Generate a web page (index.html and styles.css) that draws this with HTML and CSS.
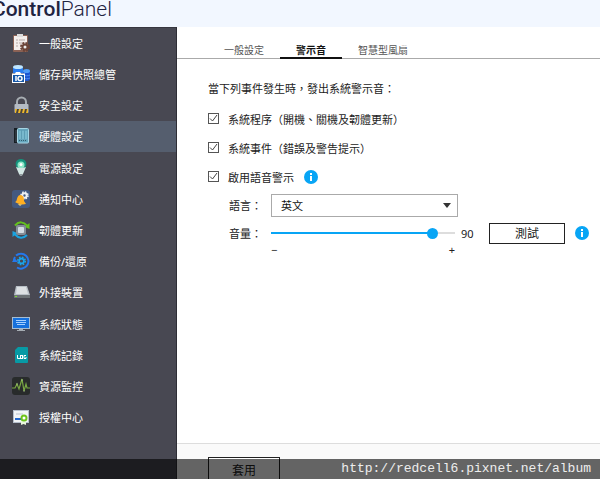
FILE: index.html
```
<!DOCTYPE html>
<html lang="zh-Hant">
  <head>
    <meta charset="UTF-8" />
    <meta name="viewport" content="width=device-width, initial-scale=1.0" />
    <title>ControlPanel</title>
    <link rel="stylesheet" href="styles.css">
  </head>
  <body>
    <div class="window">
      <header class="topbar">
        <h1 class="title"><b>Control</b>Panel</h1>
      </header>

      <div class="main">
        <nav class="sidebar">
          <ul class="menu">
            <li><a href="#">
              <svg class="icon" viewBox="0 0 18 18"><rect x="1" y="1" width="15" height="17" rx="1" fill="#8b6255"/><path d="M2 2h13v14H2z" fill="#f4eeec"/><path d="M5 0h6v3H5z" fill="#ddd"/><path d="M4 6h2M4 9h2M4 12h2M7 6h6M7 9h3" stroke="#b5a9a6"/><circle cx="13" cy="13" r="4" fill="none" stroke="#6b4438" stroke-width="2" stroke-dasharray="2 1.140"/><circle cx="13" cy="13" r="2.500" fill="#eee" stroke="#6b4438" stroke-width="2"/></svg>
              一般設定</a></li>
            <li><a href="#">
              <svg class="icon" viewBox="0 0 18 18"><path d="M1 2v6h10V2z" fill="#2a7df0"/><ellipse cx="6" cy="2" rx="5" ry="2" fill="#bfe6ff"/><path d="M11 6v9c2 2 7 1 7-1V6z" fill="#1d55d0"/><ellipse cx="14.500" cy="6" rx="3.500" ry="2" fill="#4f9cf6"/><path d="M11 10c2 1 5 1 7 0M11 13c2 1 5 1 7 0" fill="none" stroke="#4f8bf0"/><path d="M0 8.500h3l1-1.500h4l1 1.500h4V18H0z" fill="#fff"/><path d="M1 10h11v7H1z" fill="#1557a8"/><path d="M4 11v5" stroke="#fff" stroke-width="1.500"/><circle cx="8" cy="13.500" r="2" fill="none" stroke="#fff" stroke-width="1.500"/></svg>
              儲存與快照總管</a></li>
            <li><a href="#">
              <svg class="icon" viewBox="0 0 18 18"><path d="M5 10V6a4 4 0 0 1 9 0v4" fill="none" stroke="#a7adb2" stroke-width="2"/><rect x="2.500" y="8" width="14" height="9" rx="1" fill="#b4bbc4"/><path d="M3 13h13v4H3z" fill="#efb82c"/><path d="M5 13h2l-1 4H4zM9 13h2l-1 4H8zM13 13h2l-1 4h-2z" fill="#4b4438"/></svg>
              安全設定</a></li>
            <li class="active"><a href="#">
              <svg class="icon" viewBox="0 0 18 18"><path d="M2 1h5v15H2z" fill="#171e24"/><path d="M4 3v12" stroke="#46505a"/><rect x="5.500" y="1.500" width="11" height="14.500" rx="1" fill="#65a6bd" stroke="#a6d5e4"/><path d="M7 4h8v8H7z" fill="#78b9cd"/><path d="M9.500 3v9M12.500 3v9" stroke="#5d9eb5"/><path d="M7 13.500h8" stroke="#335d6c" stroke-dasharray="1 1"/></svg>
              硬體設定</a></li>
            <li><a href="#">
              <svg class="icon" viewBox="0 0 18 18"><path d="M9 0C4 0 3 4 4 7l3 6h4l3-6c1-3 0-7-5-7z" fill="#15937d"/><circle cx="9" cy="6" r="3.500" fill="#8ee8c8"/><path d="M4 8l3 7q2 4 4 0l3-7q-5 2-10 0z" fill="#d3e6e4"/><path d="M7 15q2 4 4 0z" fill="#8e979b"/><circle cx="9" cy="5.500" r="1.500" fill="#fff"/></svg>
              電源設定</a></li>
            <li><a href="#">
              <svg class="icon" viewBox="0 0 18 18"><rect width="18" height="18" rx="3" fill="#435980"/><circle cx="12.500" cy="5.500" r="3.500" fill="none" stroke="#eef1f6" stroke-width="1.500" stroke-dasharray="1.500 1.250"/><circle cx="12.500" cy="5.500" r="2.200" fill="none" stroke="#eef1f6" stroke-width="2"/><path d="M3 12c3-1 1-6 5-7 4 0 4 4 4 6l2 3c-4 1-8 0-11-2z" fill="#ffaf22"/><path d="M6 14q2 3 4 .5" fill="#ffdc72"/></svg>
              通知中心</a></li>
            <li><a href="#">
              <svg class="icon" viewBox="0 0 18 18"><path d="M3 4.500Q9-2 15.500 5" fill="none" stroke="#63c11d" stroke-width="2"/><path d="M17.500 2v6l-5-2z" fill="#63c11d"/><path d="M15 14Q9 20 2.500 13" fill="none" stroke="#1ba3df" stroke-width="2"/><path d="M.5 16v-6l5 2z" fill="#1ba3df"/><rect x="4" y="4" width="10" height="10" rx="2" fill="#858e98"/><rect x="6" y="6" width="6" height="6" rx="1" fill="#d4dce2"/></svg>
              韌體更新</a></li>
            <li><a href="#">
              <svg class="icon" viewBox="0 0 18 18"><path d="M4 3.500A7.500 7.500 0 1 1 5 15.500M2 9A7.500 7.500 0 0 1 3 5" fill="none" stroke="#2478ed" stroke-width="2"/><path d="M0 10l2.500-4L6 10z" fill="#2478ed"/><circle cx="9.500" cy="9" r="3.700" fill="none" stroke="#18a4ed" stroke-width="1.600" stroke-dasharray="1.600 1.300"/><circle cx="9.500" cy="9" r="2.400" fill="none" stroke="#18a4ed" stroke-width="1.600"/></svg>
              備份/還原</a></li>
            <li><a href="#">
              <svg class="icon" viewBox="0 0 18 18"><path d="M4 3h11l3 9H2z" fill="#b9c0c7"/><path d="M5 4h9l2 7H4z" fill="#dde1e4"/><path d="M2 12h16v3H2z" fill="#6c7276"/><path d="M3 13.500h2" stroke="#7bd92d"/></svg>
              外接裝置</a></li>
            <li><a href="#">
              <svg class="icon" viewBox="0 0 18 18"><path d="M0 2h18v12H0z" fill="#a6bdd3"/><path d="M1 3h16v10H1z" fill="#1670dc"/><path d="M4 5.500h10M4 7.500h10M5 9.500h8" stroke="#a6d0ff"/><path d="M7 14h4v1h2v1H5v-1h2z" fill="#a6adb3"/></svg>
              系統狀態</a></li>
            <li><a href="#">
              <svg class="icon" viewBox="0 0 18 18"><path d="M6 1h9a1 1 0 0 1 1 1v14a1 1 0 0 1-1 1H4a1 1 0 0 1-1-1V4z" fill="#079aa5"/><path d="M5.500 9v3.500h2.500M14 9.500h-2v3h2V11" fill="none" stroke="#fff"/><rect x="8.500" y="9.500" width="2" height="3" fill="none" stroke="#fff"/></svg>
              系統記錄</a></li>
            <li><a href="#">
              <svg class="icon" viewBox="0 0 18 18"><rect width="18" height="18" rx="3" fill="#282b2b"/><path d="M0 11h3l2-4 2 5 3-10 2 12 2-7 1 4h3" fill="none" stroke="#79a744" stroke-width="1.200"/><path d="M4.500 7h1M9.500 3h1M11.500 14h1" stroke="#d3eeb3"/></svg>
              資源監控</a></li>
            <li><a href="#">
              <svg class="icon" viewBox="0 0 18 18"><rect x="1.500" y="2.500" width="15" height="12" fill="#f2f5f8" stroke="#b7c0cd"/><path d="M4 6h7" stroke="#b9c2cf"/><path d="M3 11h6" stroke="#2469d0" stroke-width="2"/><path d="M9 12h5v5l-2.500-1L9 17z" fill="#e9f7dd"/><circle cx="12" cy="10" r="2.500" fill="#fff" stroke="#6ec41d" stroke-width="2"/></svg>
              授權中心</a></li>
          </ul>
        </nav>

        <section class="content">
          <div class="tabs">
            <a href="#" class="tab">一般設定</a>
            <a href="#" class="tab selected">警示音</a>
            <a href="#" class="tab">智慧型風扇</a>
          </div>

          <form class="settings">
            <p class="intro">當下列事件發生時，發出系統警示音：</p>
            <div class="option">
              <label><input type="checkbox" checked>系統程序（開機、關機及韌體更新）</label>
            </div>
            <div class="option">
              <label><input type="checkbox" checked>系統事件（錯誤及警告提示）</label>
            </div>
            <div class="option">
              <label><input type="checkbox" checked>啟用語音警示</label>
              <svg class="info" viewBox="0 0 14 14"><circle cx="7" cy="7" r="7" fill="#08a5f5"/><path d="M6 3h2v2H6zM6 6h2v5H6z" fill="#fff"/></svg>
            </div>
            <div class="field">
              <label for="language">語言：</label>
              <div class="select">
                <select id="language"><option>英文</option></select>
                <svg class="arrow" viewBox="0 0 8 5"><path d="M0 0h8L4 5z" fill="#333"/></svg>
              </div>
            </div>
            <div class="field volume">
              <label for="volume">音量：</label>
              <div class="slider">
                <input type="range" id="volume" min="0" max="100" value="90">
              </div>
              <output for="volume">90</output>
              <button type="button" class="btn test">測試</button>
              <svg class="info" viewBox="0 0 14 14"><circle cx="7" cy="7" r="7" fill="#08a5f5"/><path d="M6 3h2v2H6zM6 6h2v5H6z" fill="#fff"/></svg>
            </div>
            <div class="range-ends"><span>−</span><span>+</span></div>
          </form>

          <footer class="actions">
            <button type="button" class="btn apply">套用</button>
          </footer>
        </section>
      </div>

      <div class="url-bar">http://redcell6.pixnet.net/album</div>
    </div>
  </body>
</html>
```

FILE: styles.css
```
* {
  margin: 0;
  padding: 0;
  box-sizing: border-box;
}

body {
  font-family: "Noto Sans", "Noto Sans CJK TC", sans-serif;
  font-size: 11px;
  color: #222;
  background: #fff;
}

a {
  color: inherit;
  text-decoration: none;
}

.window {
  position: relative;
  display: flex;
  flex-direction: column;
  height: 100vh;
  overflow: hidden;
}

/* Header */
.topbar {
  flex: none;
  height: 27px;
  background: #f2f7ff;
}
.title {
  margin-left: -8px;
  font-family: Roboto, sans-serif;
  font-size: 21px;
  line-height: 18px;
  font-weight: 300;
  color: #1f2442;
}
.title b {
  font-weight: 500;
}

.main {
  flex: 1;
  display: flex;
  min-height: 0;
}

/* Sidebar */
.sidebar {
  flex: none;
  width: 177px;
  background: #484852;
  border-right: 1px solid #2e2e36;
  box-shadow: inset 0 1px #37373f;
}
.menu {
  display: flex;
  flex-direction: column;
  min-height: 406px;
  list-style: none;
}
.menu li {
  flex: 1;
  display: flex;
}
.menu a {
  flex: 1;
  display: flex;
  align-items: center;
  gap: 9px;
  padding-left: 12px;
  color: #fff;
}
.menu .active {
  background: #555e6e;
}
.icon {
  flex: none;
  width: 18px;
  height: 18px;
}

/* Content */
.content {
  flex: 1;
  min-width: 0;
  display: flex;
  flex-direction: column;
}
.tabs {
  display: flex;
  height: 32px;
  padding-left: 31px;
  border-bottom: 1px solid #aaa;
}
.tab {
  height: 32px;
  padding: 0 16px;
  line-height: 47px;
  font-size: 10px;
  color: #555;
}
.tab.selected {
  border-bottom: 2px solid #111;
  color: #111;
  font-weight: bold;
}

.settings {
  flex: 1;
  padding: 20px 10px 0 31px;
}
.intro {
  line-height: 20px;
  margin-bottom: 5px;
}
.option {
  display: flex;
  align-items: center;
  gap: 10px;
  height: 29px;
}
.option label {
  display: flex;
  align-items: center;
  gap: 9px;
}
.option input {
  appearance: none;
  width: 11px;
  height: 11px;
  border: 1px solid #555;
  background: #fff url("data:image/svg+xml,%3Csvg xmlns='http://www.w3.org/2000/svg' viewBox='0 0 9 9'%3E%3Cpath d='M1 4.500L3.500 7L8 1' fill='none' stroke='%23444'/%3E%3C/svg%3E");
}
.info {
  flex: none;
  width: 14px;
  height: 14px;
}

.field {
  display: flex;
  align-items: center;
  height: 28px;
  padding-left: 21px;
}
.field label {
  width: 42px;
}
.select {
  position: relative;
  width: 187px;
}
.select select {
  appearance: none;
  width: 100%;
  height: 23px;
  padding-left: 9px;
  border: 1px solid #aaa;
  background: #fff;
  color: #111;
  font: inherit;
}
.arrow {
  position: absolute;
  top: 9px;
  right: 7px;
  width: 8px;
  height: 5px;
  pointer-events: none;
}
.slider {
  display: flex;
  width: 184px;
}
.slider input {
  appearance: none;
  width: 100%;
  height: 12px;
  background: linear-gradient(90deg, #08a5f5 88%, #ddd 88%) center / 100% 2px no-repeat;
}
.slider input::-webkit-slider-thumb {
  appearance: none;
  width: 11px;
  height: 11px;
  border-radius: 50%;
  background: #08a5f5;
}
.volume output {
  width: 34px;
  padding-left: 6px;
}
.btn {
  border: 1px solid #222;
  background: #fff;
  font: inherit;
  font-size: 12px;
  color: #222;
}
.test {
  width: 76px;
  height: 21px;
  margin-right: 10px;
}
.range-ends {
  display: flex;
  justify-content: space-between;
  width: 184px;
  margin-left: 63px;
  line-height: 6px;
}

.actions {
  flex: none;
  height: 36px;
  padding: 13px 31px 0;
  border-top: 1px solid #ddd;
  background: #fafafa;
}
.apply {
  width: 72px;
  height: 26px;
}

/* Translucent strip over the bottom edge */
.url-bar {
  position: absolute;
  right: 0;
  bottom: 0;
  left: 0;
  padding-right: 9px;
  background: rgba(0, 0, 0, 0.6);
  color: #eee;
  font-family: "Liberation Mono", monospace;
  font-size: 13px;
  line-height: 20px;
  text-align: right;
}
```
